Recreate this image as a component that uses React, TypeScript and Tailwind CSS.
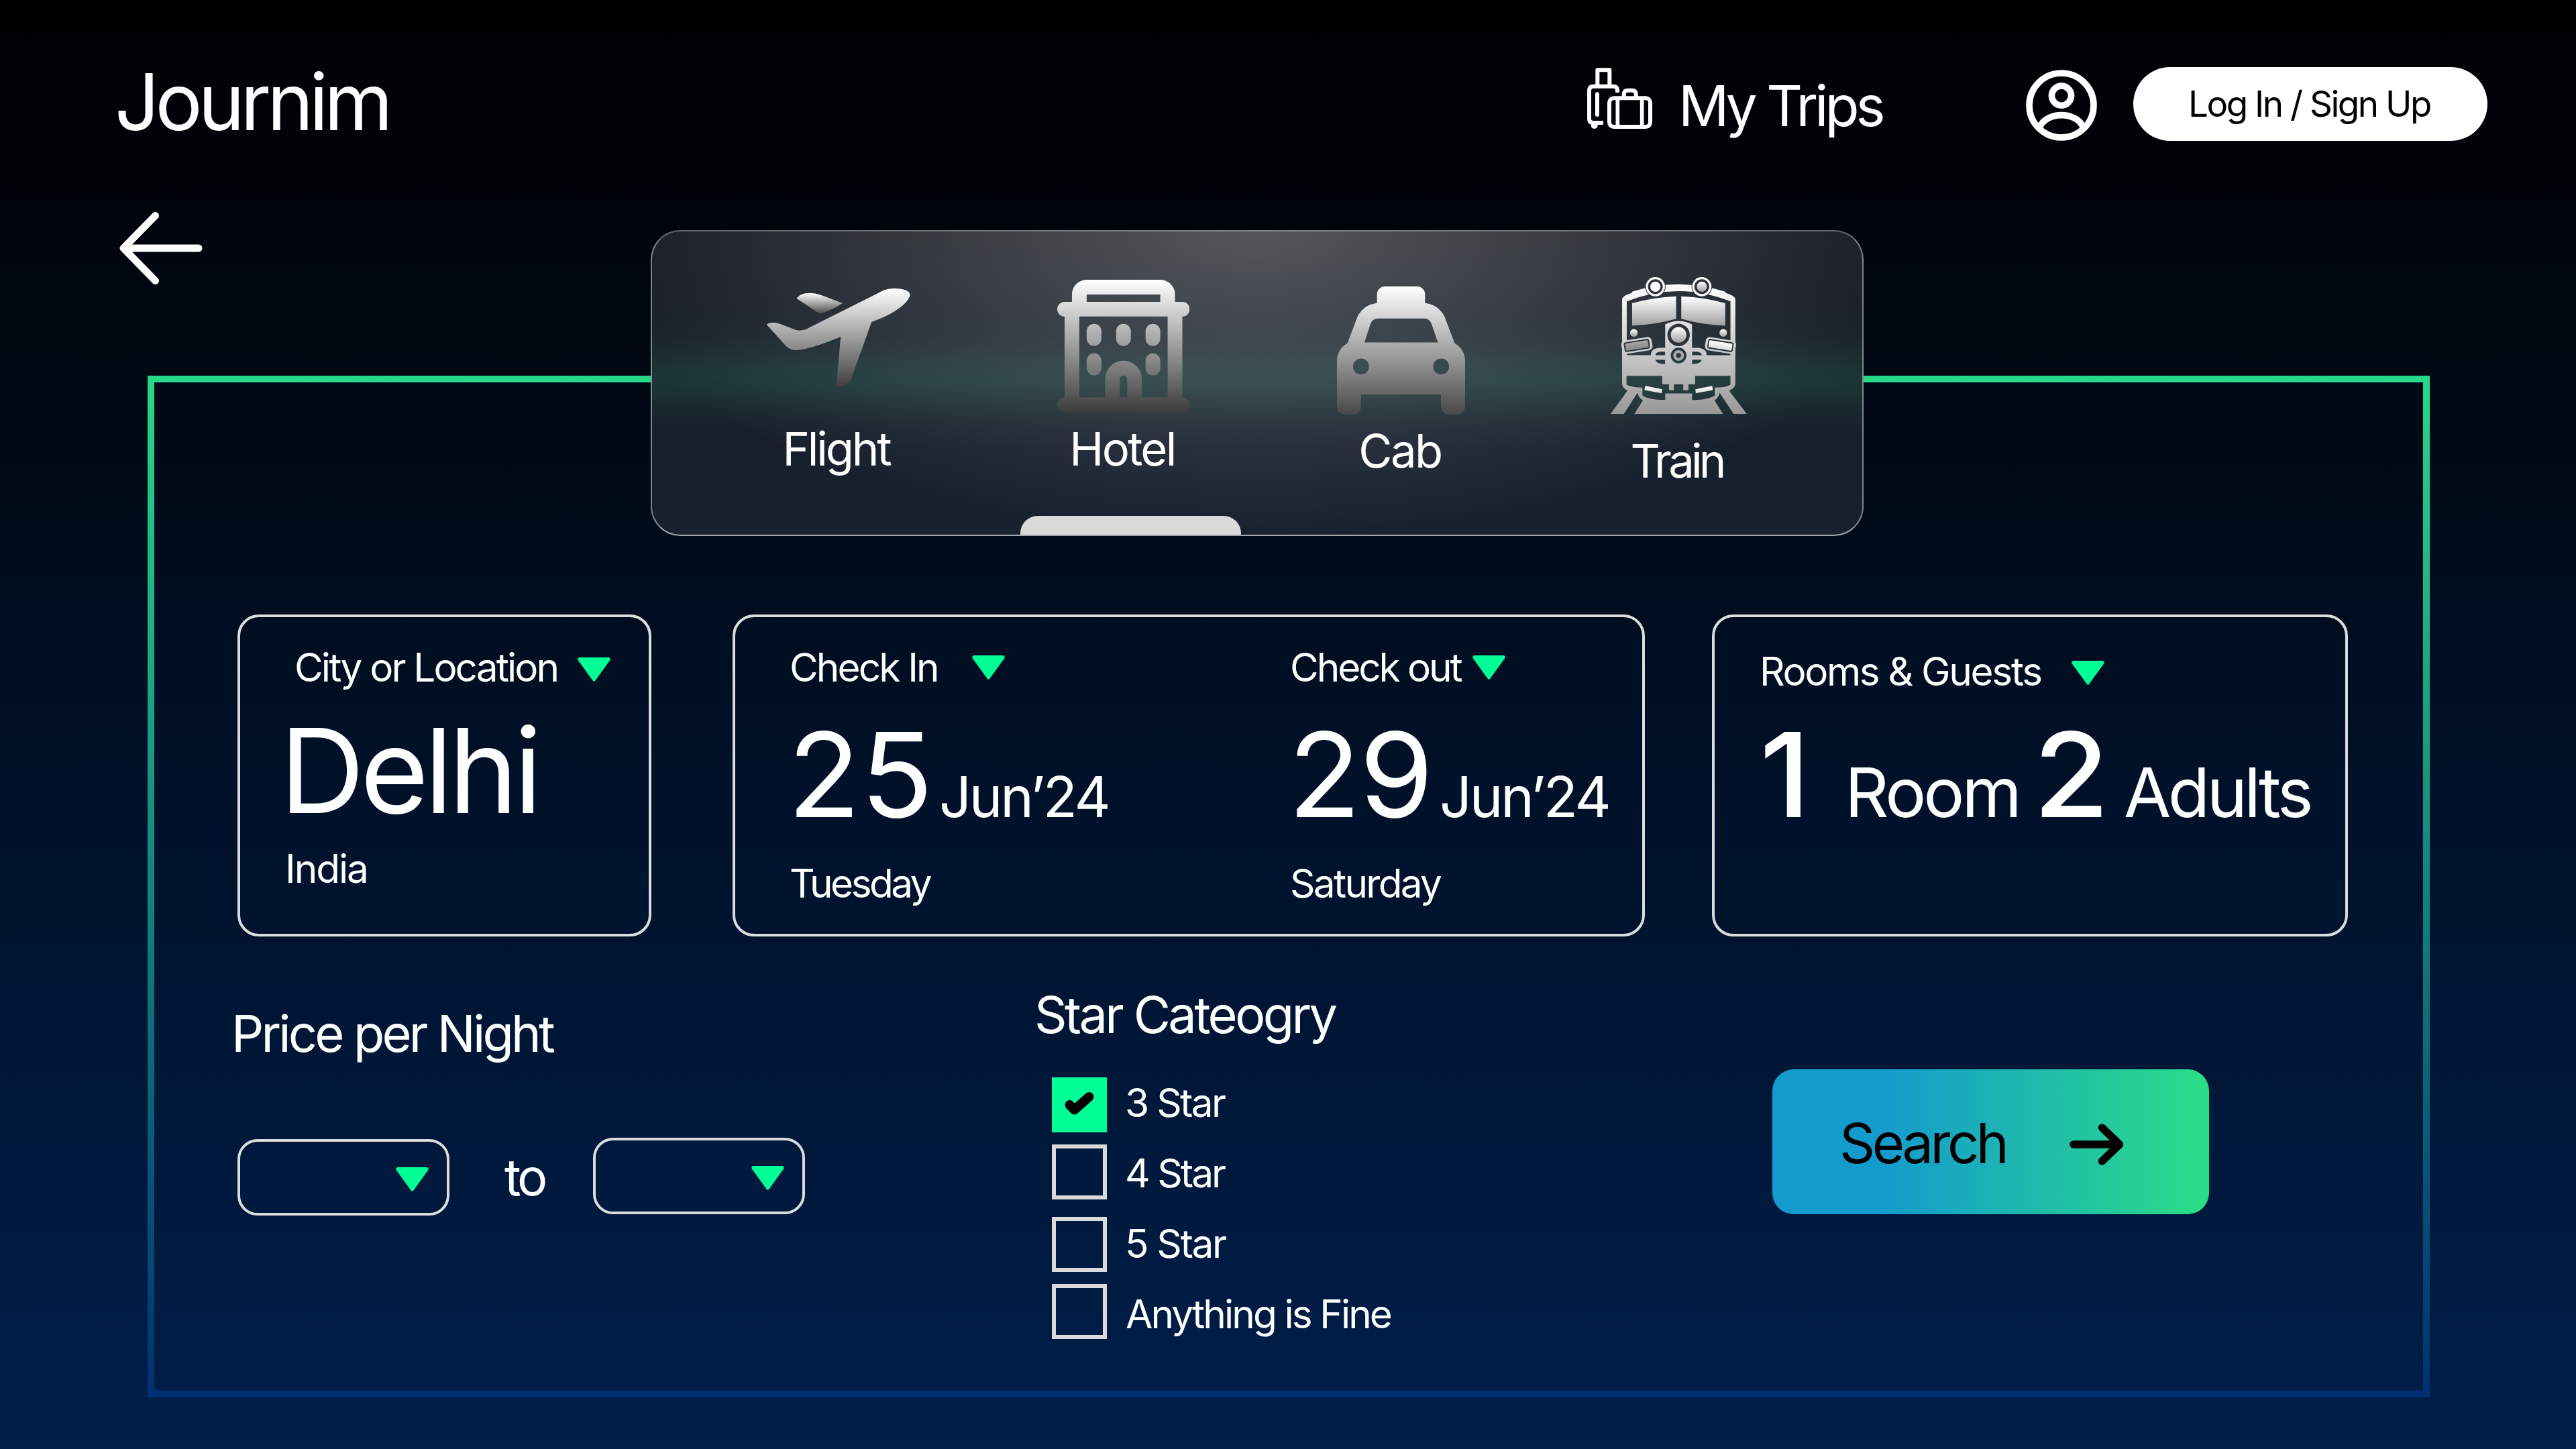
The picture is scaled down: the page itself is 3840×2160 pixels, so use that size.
import type { ReactNode } from "react";

function Triangle({ className = "" }: { className?: string }) {
  return (
    <svg className={`h-[36px] w-[49px] shrink-0 ${className}`} viewBox="0 0 49 36">
      <path
        d="M2.5 0H46.5Q49.5 1 48.4 4L26.4 34.4Q24.5 37 22.6 34.4L.6 4Q-.5 1 2.5 0Z"
        fill="#00ff94"
      />
    </svg>
  );
}

function Label({ children, className = "" }: { children: ReactNode; className?: string }) {
  return <span className={`text-[58.5px] leading-none ${className}`}>{children}</span>;
}

function SuitcaseIcon({ className }: { className: string }) {
  return (
    <svg className={className} viewBox="0 0 390 360" fill="none" stroke="#fff" strokeWidth="18">
      <path d="M94 108V43H148V108" strokeLinejoin="round" />
      <path d="M183 144V134Q183 116 165 116H76Q57 116 57 135V261Q57 279 75 279H120" />
      <circle cx="80" cy="291" r="15" fill="#fff" stroke="none" />
      <path d="M93 151V243" strokeLinecap="round" />
      <rect x="147" y="169" width="183" height="128" rx="20" />
      <path d="M212 165V152Q212 134 230 134H248Q266 134 266 152V165" />
      <path d="M184 170V296M293 170V296" strokeWidth="17" />
    </svg>
  );
}

function UserIcon({ className }: { className: string }) {
  return (
    <svg className={className} viewBox="0 0 106 106" fill="none" stroke="#fff" strokeWidth="9.6">
      <circle cx="53" cy="53" r="48" />
      <circle cx="53" cy="38.6" r="14.6" />
      <path d="M20.5 86C30 61.500 76 61.500 85.500 86" />
    </svg>
  );
}

function BackIcon({ className }: { className: string }) {
  return (
    <svg className={className} viewBox="0 0 124 108" fill="none" stroke="#fff" strokeWidth="11" strokeLinecap="round" strokeLinejoin="round">
      <path d="M53.500 5.500 6 54 53.500 102.500M8 54H118" />
    </svg>
  );
}

function Fade({ id, to = "#404040" }: { id: string; to?: string }) {
  return (
    <linearGradient id={id} x1="0" y1="0" x2="0" y2="1">
      <stop offset="0" stopColor="#fff" />
      <stop offset="1" stopColor={to} />
    </linearGradient>
  );
}

function PlaneIcon({ className }: { className: string }) {
  return (
    <svg className={className} viewBox="0 0 214 148">
      <defs>
        <Fade id="plane" to="#3c3c3c" />
        <Fade id="plane-wing" to="#4a4a4a" />
      </defs>
      <path
        fill="url(#plane)"
        d="M9.600 51C5 51 1 52 0 54L27 84C32 90 38 92.500 46 92C58 91 88 82 110.300 71.700L103.300 147.800C113 147 122 142 125 137L156.300 50C172 44 186 38 195 31C206 24 213 15 213.700 9C213 3 202 0 190 0C180 0 172 3 165 7.500L64 58C58 62 50 63.500 44 62L20 53C16 51.500 13 51 9.600 51Z"
      />
      <path
        fill="url(#plane-wing)"
        d="M64 6.700C55 6.700 47 10 44.600 15L79 37.900Q98 32 113 22L80 9.500Q72 6.700 64 6.700Z"
      />
    </svg>
  );
}

function HotelIcon({ className }: { className: string }) {
  return (
    <svg className={className} viewBox="0 0 18 18">
      <defs>
        <Fade id="hotel" to="#3c3c3c" />
      </defs>
      <path
        fill="url(#hotel)"
        fillRule="evenodd"
        d="M4 0H14A2 2 0 0 1 16 2V3H17A1 1 0 0 1 17 5V16A1 1 0 0 1 17 18H1A1 1 0 0 1 1 16V5A1 1 0 0 1 1 3H2V2A2 2 0 0 1 4 0ZM4 2V3H14V2ZM3 5V16H6.500V13.500A2.500 2.500 0 0 1 11.500 13.500V16H15V5ZM8.500 16H9.500V13.500A.5 .5 0 0 0 8.500 13.500ZM4 7A1 1 0 0 1 6 7V8A1 1 0 0 1 4 8ZM8 7A1 1 0 0 1 10 7V8A1 1 0 0 1 8 8ZM12 7A1 1 0 0 1 14 7V8A1 1 0 0 1 12 8ZM4 11A1 1 0 0 1 6 11V12A1 1 0 0 1 4 12ZM12 11A1 1 0 0 1 14 11V12A1 1 0 0 1 12 12Z"
      />
    </svg>
  );
}

function CabIcon({ className }: { className: string }) {
  return (
    <svg className={className} viewBox="0 0 16 16">
      <defs>
        <Fade id="cab" to="#484848" />
      </defs>
      <path
        fill="url(#cab)"
        fillRule="evenodd"
        d="M6 0H10A1 1 0 0 1 11 1V2.070A3 3 0 0 1 13.600 4.200L14.700 7.100A2.500 2.500 0 0 1 16 9.200V15A1 1 0 0 1 15 16H14A1 1 0 0 1 13 15V13.500H3V15A1 1 0 0 1 2 16H1A1 1 0 0 1 0 15V9.200A2.500 2.500 0 0 1 1.300 7.100L2.400 4.200A3 3 0 0 1 5 2.070V1A1 1 0 0 1 6 0ZM5.100 4A1 1 0 0 0 4.200 4.650L3.420 7H12.600L11.800 4.650A1 1 0 0 0 10.900 4ZM3 9A1 1 0 0 0 3 11A1 1 0 0 0 3 9ZM13 9A1 1 0 0 0 13 11A1 1 0 0 0 13 9Z"
      />
    </svg>
  );
}

function TrainIcon({ className }: { className: string }) {
  return (
    <svg className={className} viewBox="30 38 612 614">
      <defs>
        <linearGradient id="train" gradientUnits="userSpaceOnUse" x1="0" y1="38" x2="0" y2="652">
          <stop offset="0" stopColor="#fff" />
          <stop offset="0.150" stopColor="#f4f4f4" />
          <stop offset="1" stopColor="#989898" />
        </linearGradient>
        <Fade id="train-part" to="#a0a0a0" />
        <Fade id="train-bright" to="#d8d8d8" />
        <linearGradient id="train-dim" x1="0" y1="0" x2="0" y2="1">
          <stop offset="0" stopColor="#a6a6a6" />
          <stop offset="1" stopColor="#8a8a8a" />
        </linearGradient>
        <mask id="train-body" maskUnits="userSpaceOnUse" x="30" y="38" width="612" height="614">
          <g fill="#fff">
            <path d="M83 140Q83 127 102 118L128 108V103Q336 37 545 103V108L571 118Q590 127 590 140V515Q590 535 562 546L642 652H583L520 556Q515 578 497 590L535 652H137L176 590Q157 578 152 556L90 652H30L108 546Q83 535 83 515Z" />
          </g>
          <g fill="#000">
            <path d="M104 147Q336 55 568 147V388H104Z" />
          </g>
          <g fill="#fff">
            <path d="M212 389V380Q216 356 254 355H418Q457 356 461 380V389Z" />
          </g>
          <g fill="#000">
            <path d="M232 388Q234 373 256 372H276V388ZM440 388Q438 373 416 372H396V388ZM232 408H276V428Q236 427 232 408ZM440 408H396V428Q436 427 440 408Z" />
            <path d="M103 480H263V518H293V545H315V518H357V545H380V518H410V480H568V520Q545 533 498 533V568Q470 588 396 588V559H276V588Q202 588 174 568V533Q125 532 103 520Z" />
            <circle cx="232" cy="81" r="46" />
            <circle cx="440" cy="81" r="46" />
          </g>
          <g fill="#fff">
            <path d="M276 250Q336 220 396 250V517H276Z" />
            <circle cx="232" cy="81" r="43" />
            <circle cx="440" cy="81" r="43" />
            <rect x="81" y="314" width="137" height="60" rx="18" transform="rotate(-9 150 344)" />
            <rect x="455" y="314" width="137" height="60" rx="18" transform="rotate(9 523 344)" />
          </g>
          <g fill="#000">
            <circle cx="232" cy="81" r="33" />
            <circle cx="440" cy="81" r="33" />
            <circle cx="336" cy="297" r="50" />
            <circle cx="336" cy="389" r="35" />
            <rect x="92" y="322" width="115" height="44" rx="9" transform="rotate(-9 150 344)" />
            <rect x="466" y="322" width="115" height="44" rx="9" transform="rotate(9 523 344)" />
          </g>
        </mask>
      </defs>
      <rect x="30" y="38" width="612" height="614" fill="url(#train)" mask="url(#train-body)" />
      <g fill="url(#train-part)">
        <path d="M128 155Q225 128 325 124V225Q230 252 128 256Z" />
        <path d="M545 155Q448 128 348 124V225Q443 252 545 256Z" />
        <circle cx="336" cy="297" r="35" />
        <circle cx="440" cy="81" r="23" />
        <circle cx="136" cy="288" r="17" />
        <circle cx="536" cy="288" r="17" />
      </g>
      <circle cx="232" cy="81" r="23" fill="#fff" />
      <path fill="#a8a8a8" fillRule="evenodd" d="M336 365A24 24 0 0 1 336 413A24 24 0 0 1 336 365ZM336 378A11 11 0 0 0 336 400A11 11 0 0 0 336 378Z" />
      <rect x="98" y="328" width="103" height="32" rx="5" fill="url(#train-dim)" transform="rotate(-9 150 344)" />
      <rect x="471" y="328" width="105" height="32" rx="5" fill="url(#train-bright)" transform="rotate(9 523 344)" />
      <path fill="url(#train-bright)" d="M187 525 263 540 260 558 183 544ZM487 525 411 540 413 558 489 544Z" />
    </svg>
  );
}

function Tab({ icon, label, className, labelClass }: { icon: ReactNode; label: string; className: string; labelClass: string }) {
  return (
    <button className={`flex flex-col items-center ${className}`}>
      <span className="flex h-[278px] items-start">{icon}</span>
      <span className={`text-[68.8px] leading-none ${labelClass}`}>{label}</span>
    </button>
  );
}

function DateField({ label, labelClass, triangleClass, day, dayClass, month, weekday, weekdayClass }: {
  label: string; labelClass: string; triangleClass: string; day: string; dayClass: string; month: string; weekday: string; weekdayClass: string;
}) {
  return (
    <div className="flex flex-col">
      <div className="flex items-start">
        <Label className={labelClass}>{label}</Label>
        <Triangle className={triangleClass} />
      </div>
      <div className="mt-[42px] -ml-[3px] flex h-[175px] items-baseline">
        <span className={`w-[226px] origin-left text-[175px] leading-none ${dayClass}`}>{day}</span>
        <span className="text-[84px] leading-none tracking-[-3.2px]">{month}</span>
      </div>
      <Label className={`mt-[46px] ${weekdayClass}`}>{weekday}</Label>
    </div>
  );
}

function PriceSelect({ className }: { className: string }) {
  return (
    <button className={`flex h-[114px] w-[316px] shrink-0 items-start justify-end rounded-[30px] border-4 border-[#dcdcdc] pt-[38px] pr-[27px] ${className}`}>
      <Triangle />
    </button>
  );
}

function StarOption({ label, checked, className, labelClass }: { label: string; checked?: boolean; className: string; labelClass: string }) {
  return (
    <label className={`flex h-[82px] items-start ${className}`}>
      {checked ? (
        <span className="flex size-[82px] bg-[#00ff94]">
          <svg className="mt-[20px] ml-[18px] h-[38px] w-[46px]" viewBox="0 0 46 38" fill="none" stroke="#000" strokeWidth="14" strokeLinecap="round" strokeLinejoin="round">
            <path d="M8.500 21 15.500 28.500 37.500 9" />
          </svg>
        </span>
      ) : (
        <span className="size-[82px] border-[6.500px] border-[#dadada]" />
      )}
      <Label className={labelClass}>{label}</Label>
    </label>
  );
}

// Frosted glass: a white sheen over the softened glow of the panel's top edge.
const glass =
  "bg-origin-border bg-[radial-gradient(ellipse_56%_100%_at_50%_0%,rgba(255,255,255,0.33),rgba(255,255,255,0.09)),linear-gradient(transparent_122px,rgba(40,216,137,0.008)_142px,rgba(40,216,137,0.025)_162px,rgba(40,216,137,0.06)_182px,rgba(40,216,137,0.1)_203px,rgba(40,216,137,0.118)_222px,rgba(40,216,137,0.1)_241px,rgba(40,216,137,0.06)_262px,rgba(40,216,137,0.025)_282px,rgba(40,216,137,0.008)_302px,transparent_322px),linear-gradient(#00050c,#000b1c)]";

export default function App() {
  return (
    <main className="relative h-[2160px] w-[3840px] overflow-hidden bg-linear-to-b/srgb from-black to-[#001f4b] font-['Inter',sans-serif] whitespace-nowrap text-white">
      <header className="flex h-[316px] items-start pl-[171px]">
        <h1 className="mt-[93px] w-[2182px] text-[117px] leading-none tracking-[-6.200px]">Journim</h1>
        <a className="flex w-[667px] items-start">
          <SuitcaseIcon className="mt-[90px] -ml-[3px] h-[120px] w-[130px]" />
          <span className="mt-[116px] ml-[22px] text-[83.500px] leading-none tracking-[-5px]">My Trips</span>
        </a>
        <UserIcon className="mt-[104px] size-[106px]" />
        <button className="mt-[100px] ml-[54px] flex h-[110px] w-[528px] items-start rounded-full bg-white pt-[29px] pl-[82px] text-[53px] leading-none tracking-[-2.510px] text-black">
          Log In / Sign Up
        </button>
      </header>

      <BackIcon className="ml-[178px] h-[108px] w-[124px]" />

      <section className="mt-[136px] ml-[220px] h-[1523px] w-[3402px] border-[10px] [border-image:linear-gradient(#28d889,#003070)_10]">
        <div className="flex pt-[346px] pl-[124px]">
          <div className="flex h-[480px] w-[617px] flex-col rounded-[32px] border-4 border-[#dcdcdc] pt-[46px]">
            <div className="flex items-start pl-[81px]">
              <Label className="w-[422px] tracking-[-2.860px]">City or Location</Label>
              <Triangle className="mt-[14px]" />
            </div>
            <span className="mt-[36.500px] pl-[59px] text-[175px] leading-none tracking-[-6.300px]">Delhi</span>
            <Label className="mt-[29.500px] pl-[67px] tracking-[-2.070px]">India</Label>
          </div>

          <div className="ml-[121px] flex h-[480px] w-[1360px] rounded-[32px] border-4 border-[#dcdcdc] pt-[46px] pl-[81px]">
            <div className="w-[746px]">
              <DateField
                label="Check In" labelClass="w-[272px] tracking-[-2.870px]" triangleClass="mt-[11px]"
                day="25" dayClass="scale-x-[1.018]" month="Jun’24"
                weekday="Tuesday" weekdayClass="tracking-[-3.500px]"
              />
            </div>
            <DateField
              label="Check out" labelClass="w-[272px] tracking-[-3.070px]" triangleClass="mt-[11px]"
              day="29" dayClass="scale-x-[1.018] tracking-[-2px]" month="Jun’24"
              weekday="Saturday" weekdayClass="tracking-[-2.700px]"
            />
          </div>

          <div className="ml-[100px] flex h-[480px] w-[948px] flex-col rounded-[32px] border-4 border-[#dcdcdc] pt-[51.500px] pl-[67px]">
            <div className="flex items-start">
              <Label className="w-[465px] tracking-[-2.330px]">Rooms &amp; Guests</Label>
              <Triangle className="mt-[13.500px]" />
            </div>
            <div className="mt-[36.500px] flex h-[175px] items-baseline">
              <span className="w-[127px] origin-left scale-x-[1.040] text-[175px] leading-none font-medium">1</span>
              <span className="w-[281px] text-[102px] leading-none tracking-[-4.020px]">Room</span>
              <span className="w-[135px] origin-left scale-x-[1.050] text-[175px] leading-none font-medium">2</span>
              <span className="text-[102px] leading-none tracking-[-4.600px]">Adults</span>
            </div>
          </div>
        </div>

        <div className="flex items-start">
          <div className="w-[1312px] pt-[107px] pl-[115px]">
            <h2 className="text-[75.700px] leading-none tracking-[-3.850px]">Price per Night</h2>
            <div className="mt-[117px] ml-[9px] flex items-start">
              <PriceSelect className="mt-[2px]" />
              <span className="mt-[21px] w-[214px] pl-[82px] text-[75.700px] leading-none tracking-[-5px]">to</span>
              <PriceSelect className="" />
            </div>
          </div>

          <fieldset className="w-[1100px] pt-[79px]">
            <legend className="contents">
              <span className="block text-[75.700px] leading-none tracking-[-3.650px]">Star Cateogry</span>
            </legend>
            <div className="mt-[55px] pl-[26px]">
              <StarOption label="3 Star" checked className="" labelClass="mt-[9px] ml-[27px] tracking-[-2.680px]" />
              <StarOption label="4 Star" className="mt-[18px]" labelClass="mt-[14px] ml-[27px] tracking-[-3.010px]" />
              <StarOption label="5 Star" className="mt-[26px]" labelClass="mt-[11px] ml-[27px] tracking-[-2.360px]" />
              <StarOption label="Anything is Fine" className="mt-[18px]" labelClass="mt-[16px] ml-[28px] tracking-[-2.900px]" />
            </div>
          </fieldset>

          <button className="mt-[198px] flex h-[216px] w-[651px] items-start rounded-[32px] bg-linear-to-r/srgb from-[#149bce] from-25% to-[#2bdc87] to-98% pt-[69px] pl-[100px] text-black">
            <span className="w-[343px] text-left text-[83px] leading-none tracking-[-4.500px]">Search</span>
            <svg className="mt-[12px] h-[62px] w-[81px]" viewBox="0 0 81 62" fill="none" stroke="#000" strokeWidth="11.500" strokeLinecap="round" strokeLinejoin="round">
              <path d="M6 31H70M48.500 6 74.500 31 48.500 56" />
            </svg>
          </button>
        </div>
      </section>

      <nav className={`absolute top-[343px] left-[970px] flex h-[456px] w-[1808px] overflow-hidden rounded-[44px] border-2 border-white/45 border-t-white/30 border-b-white/60 pl-[66px] ${glass}`}>
        <Tab className="w-[424px] pt-[12px]" label="Flight" labelClass="mr-[7px] tracking-[-3.200px]" icon={<PlaneIcon className="mt-[73px] h-[148px] w-[214px]" />} />
        <div className="relative flex w-[425px]">
          <Tab className="w-[425px] pt-[12px]" label="Hotel" labelClass="mr-[3px] tracking-[-2.700px]" icon={<HotelIcon className="mt-[60px] size-[197.500px]" />} />
          <span className="absolute -bottom-[2px] left-[59px] h-[30px] w-[329px] rounded-t-[26px] bg-[#d9d9d9]" />
        </div>
        <Tab className="w-[402px] pt-[15px]" label="Cab" labelClass="mr-[2px] tracking-[-2.540px]" icon={<CabIcon className="mt-[67px] size-[191px]" />} />
        <Tab className="w-[426px] pt-[30px]" label="Train" labelClass="mr-[5px] tracking-[-4.850px]" icon={<TrainIcon className="mt-[38px] size-[204.500px]" />} />
      </nav>
    </main>
  );
}
